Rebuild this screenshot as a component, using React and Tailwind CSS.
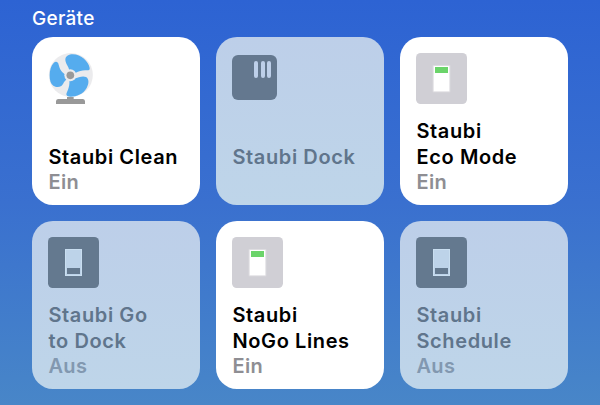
const devices = [
  { lines: ['Staubi Clean'], status: 'Ein', on: true, icon: 'fan' },
  { lines: ['Staubi Dock'], status: '', on: false, icon: 'dock' },
  { lines: ['Staubi', 'Eco Mode'], status: 'Ein', on: true, icon: 'switch' },
  { lines: ['Staubi Go', 'to Dock'], status: 'Aus', on: false, icon: 'switch' },
  { lines: ['Staubi', 'NoGo Lines'], status: 'Ein', on: true, icon: 'switch' },
  { lines: ['Staubi', 'Schedule'], status: 'Aus', on: false, icon: 'switch' },
];

function FanIcon() {
  return (
    <svg className="-mt-px h-[53px] w-[46px]" viewBox="144 156 138 159">
      <circle cx="212.500" cy="225" r="66" fill="#ebebed" />
      <g fill="#55acee">
        <path d="M208 212C206 198 196 192 196 178C197 168 207 163 218 163C244 163 266 186 269 204C270 210 266 211 261 211C248 210 239 212 226 219Z" />
        <path d="M198 224C186 219 179 207 176 194C174 185 167 183 161 189C153 197 149 211 149 226C149 241 152 252 160 257C167 262 176 263 184 258C191 252 190 245 202 236Z" />
        <path d="M222 235C236 233 247 226 258 231C268 237 267 251 260 264C250 282 230 290 212 290C204 290 198 287 199 282C204 269 210 258 208 238Z" />
      </g>
      <circle cx="211" cy="226" r="18" fill="#ebebed" />
      <circle cx="211" cy="226" r="11.500" fill="#999" />
      <path d="M201 291H221V297H249Q255 298 255 304V312H168V304Q168 298 174 297H201Z" fill="#999" />
    </svg>
  );
}

function DockIcon() {
  return (
    <div className="mt-[2px] flex h-[45px] w-[45px] items-start justify-end gap-[2.500px] rounded-[6px] bg-[#64788f] pt-[6px] pr-[6px]">
      <div className="h-[17px] w-[4px] rounded-full bg-[#bdcfe9]" />
      <div className="h-[17px] w-[4px] rounded-full bg-[#bdcfe9]" />
      <div className="h-[17px] w-[4px] rounded-full bg-[#bdcfe9]" />
    </div>
  );
}

function SwitchIcon({ on }) {
  return (
    <svg className="h-[51px] w-[51px]" viewBox="0 0 153 153">
      <rect width="153" height="153" rx="14" fill={on ? '#d0cfd5' : '#64798f'} />
      {on ? (
        <>
          <rect x="50" y="36" width="53" height="82" rx="2" fill="#dedde1" />
          <rect x="53" y="39" width="47" height="76" fill="#fff" />
          <rect x="57" y="42" width="39" height="18" fill="#6bd46a" />
        </>
      ) : (
        <>
          <rect x="51" y="36" width="51" height="81" fill="#c9def0" />
          <rect x="54" y="39" width="45" height="75" fill="#bdd3e9" />
          <rect x="57" y="93" width="39" height="18" fill="#64798f" />
        </>
      )}
    </svg>
  );
}

function DeviceCard({ device }) {
  const { lines, status, on, icon } = device;
  return (
    <div
      className={`flex h-[168px] flex-col justify-between rounded-[21px] px-4 pt-4 pb-[10px] ${
        on ? 'bg-white' : 'bg-linear-to-b from-[#bdcfe9] to-[#bed5e9]'
      }`}
    >
      {icon === 'fan' && <FanIcon />}
      {icon === 'dock' && <DockIcon />}
      {icon === 'switch' && <SwitchIcon on={on} />}
      <div className="pl-[0.500px] text-[20px] font-semibold whitespace-nowrap">
        <div className={`leading-[25.500px] tracking-[0.600px] ${on ? 'text-black' : 'text-[#60758c]'}`}>
          {lines.map((line) => (
            <div key={line}>{line}</div>
          ))}
        </div>
        <div className={`h-[25px] leading-[25px] tracking-[0.300px] ${on ? 'text-[#8e8e93]' : 'text-[#8298b0]'}`}>
          {status}
        </div>
      </div>
    </div>
  );
}

export default function App() {
  return (
    <main className="h-[405px] w-[600px] overflow-hidden bg-linear-to-b from-[#2d63d3] via-[#3a70cf] to-[#4886c8] px-8 font-['Inter',sans-serif]">
      <h1 className="h-[37px] pt-[7px] text-[19px] leading-6 font-medium tracking-[0.300px] text-white">
        Geräte
      </h1>
      <div className="grid grid-cols-[168px_168px_168px] gap-4">
        {devices.map((device) => (
          <DeviceCard key={device.lines.join(' ')} device={device} />
        ))}
      </div>
    </main>
  );
}
